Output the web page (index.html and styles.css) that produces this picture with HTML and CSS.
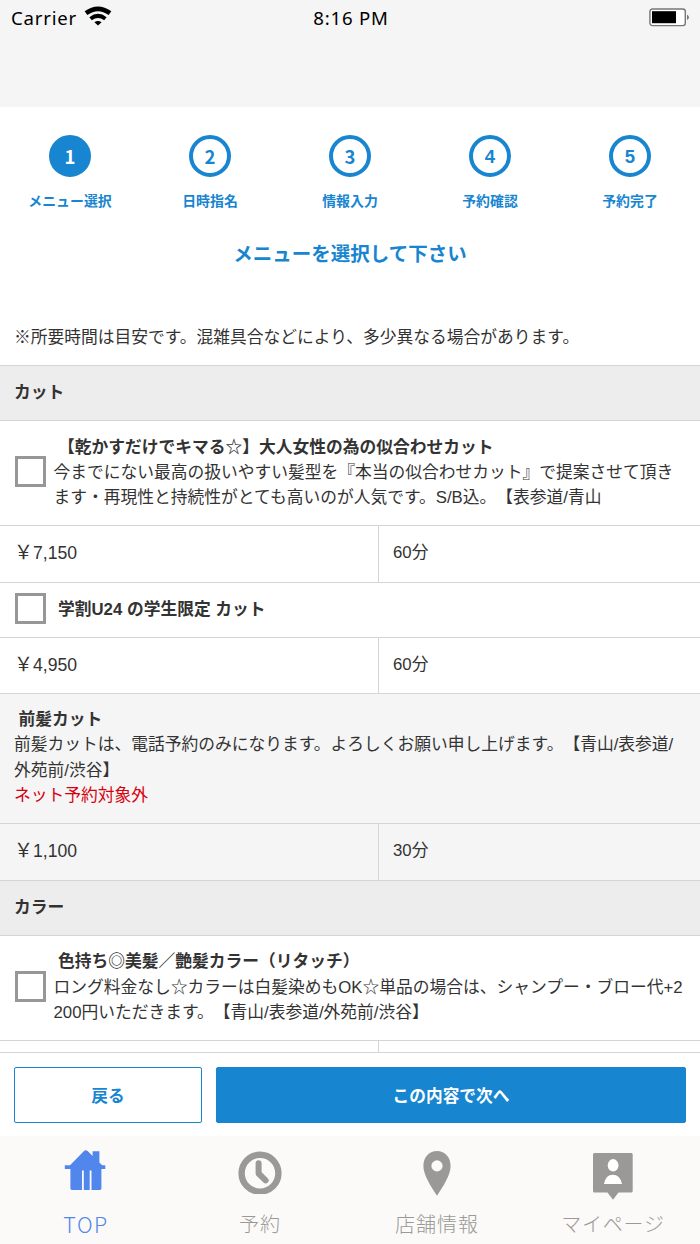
FILE: index.html
```html
<!DOCTYPE html>
<html lang="ja">
<head>
<meta charset="utf-8">
<title>メニュー選択</title>
<link rel="stylesheet" href="styles.css">
</head>
<body>
<div class="app">
  <header class="status">
    <div class="carrier"><span>Carrier</span>
      <svg class="wifi" width="28" height="20" viewBox="0 0 28 20"><g fill="none" stroke="#000"><path d="M2 7.2Q14 -1.4 26 7.2" stroke-width="4.6"/><path d="M6.6 12.8Q14 7 21.4 12.8" stroke-width="4"/></g><path d="M10.4 16.2Q14 13.6 17.6 16.2L14 19.6Z"/></svg>
    </div>
    <span class="clock">8:16 PM</span>
    <svg class="battery" width="42" height="20" viewBox="0 0 42 20"><rect x=".9" y="1" width="35.4" height="16.6" rx="2.6" fill="#fff" stroke="#777" stroke-width="1.4"/><rect x="3" y="3.2" width="24" height="12" fill="#000"/><path d="M38 6.4Q42 9.3 38 12.1Z" fill="#777"/></svg>
  </header>
  <main class="content">
    <ol class="steps">
      <li><b class="dot on">1</b><span>メニュー選択</span></li>
      <li><b class="dot">2</b><span>日時指名</span></li>
      <li><b class="dot">3</b><span>情報入力</span></li>
      <li><b class="dot arial">4</b><span>予約確認</span></li>
      <li><b class="dot arial">5</b><span>予約完了</span></li>
    </ol>
    <h1 class="title">メニューを選択して下さい</h1>
    <p class="note">※所要時間は目安です。混雑具合などにより、多少異なる場合があります。</p>
    <h2 class="category">カット</h2>
    <div class="item tall">
      <i class="check"></i>
      <div><b class="name">【乾かすだけでキマる☆】大人女性の為の似合わせカット</b><p>今までにない最高の扱いやすい髪型を『本当の似合わせカット』で提案させて頂き<br>ます・再現性と持続性がとても高いのが人気です。S/B込。【表参道/青山</p></div>
    </div>
    <div class="price"><span class="yen"><i>￥</i>7,150</span><span>60分</span></div>
    <div class="item short">
      <i class="check"></i>
      <div><b class="name">学割U24 の学生限定 カット</b></div>
    </div>
    <div class="price second"><span class="yen"><i>￥</i>4,950</span><span>60分</span></div>
    <div class="item phone">
      <div><b class="name">前髪カット</b><p>前髪カットは、電話予約のみになります。よろしくお願い申し上げます。【青山/表参道/<br>外苑前/渋谷】</p><p class="warn">ネット予約対象外</p></div>
    </div>
    <div class="price grey"><span class="yen"><i>￥</i>1,100</span><span>30分</span></div>
    <h2 class="category">カラー</h2>
    <div class="item color">
      <i class="check"></i>
      <div><b class="name">色持ち◎美髪／艶髪カラー（リタッチ）</b><p>ロング料金なし☆カラーは白髪染めもOK☆単品の場合は、シャンプー・ブロー代+2<br>200円いただきます。【青山/表参道/外苑前/渋谷】</p></div>
    </div>
    <div class="price cut"><span></span><span></span></div>
  </main>
  <div class="actions"><button class="btn back">戻る</button><button class="btn next">この内容で次へ</button></div>
  <nav class="tabs">
    <a class="tab top"><svg width="44" height="46" viewBox="0 0 44 46"><path fill="#5186ec" d="M.8 17.3H6L19.5 3.4Q21.5 1.4 23.6 3.1L28.6 8V3.3H35.4V14.5L38.2 17.3H41.3V21H37.4V40.6Q37.4 42 36 42H27.5V22.4H25.7V42H19.8V22.4H18V42H7.8Q6.4 42 6.4 40.6V21H.8Z"/></svg><span>TOP</span></a>
    <a class="tab reserve"><svg width="44" height="46" viewBox="0 0 44 46"><g fill="none" stroke="#9a9997"><circle cx="22" cy="25.2" r="18.4" stroke-width="6.4"/><path d="M20.6 15.2V25.5L27.6 32.4" stroke-width="6" stroke-linecap="round" stroke-linejoin="round"/></g></svg><span>予約</span></a>
    <a class="tab shop"><svg width="29" height="48" viewBox="0 0 29 48"><path fill="#9a9997" fill-rule="evenodd" d="M14 3.1C5.6 3.1.4 9.8.4 18c0 9 7.3 20 13.6 29.7C20.4 38 27.6 27 27.6 18 27.6 9.8 22.4 3.1 14 3.1ZM14 12.3a5.6 5.6 0 1 1 0 11.2a5.6 5.6 0 0 1 0-11.2Z"/></svg><span>店舗情報</span></a>
    <a class="tab mine"><svg width="41" height="52" viewBox="0 0 41 52"><path fill="#9a9997" d="M1.5 5H38.3Q39.7 5 39.7 6.5V43Q39.7 44.5 38.3 44.5H25.5L20 51.7 14.5 44.5H1.5Q0 44.5 0 43V6.5Q0 5 1.5 5Z"/><ellipse cx="20.1" cy="17.3" rx="5.4" ry="6.2" fill="#fff"/><path d="M11 36Q12.6 26.8 19.8 26.8T29 36Z" fill="#fff"/></svg><span>マイページ</span></a>
  </nav>
</div>
</body>
</html>
```
FILE: styles.css
```css
* { box-sizing: border-box; margin: 0; padding: 0; }
body { width: 700px; height: 1244px; overflow: hidden; background: #fff; color: #333;
  font: 16.75px/25.4px "Liberation Sans", "Noto Sans CJK JP", sans-serif;
  text-spacing-trim: space-all; }
.app { display: flex; flex-direction: column; height: 1244px; }
.status { height: 107px; flex: none; background: #f5f5f5; display: grid;
  grid-template-columns: 1fr auto 1fr; align-items: start; padding: 6px 9px 0 11px;
  font: 18.6px/24px "Noto Sans", sans-serif; letter-spacing: .8px; color: #000; }
.carrier { display: flex; gap: 6.5px; }
.battery { justify-self: end; margin-top: 2px; }
.content { height: 945px; flex: none; overflow: hidden; }
.steps { display: grid; grid-template-columns: repeat(5, 1fr); list-style: none; padding-top: 28px; height: 122px; }
.steps li { display: flex; flex-direction: column; align-items: center; gap: 12px;
  color: #1785d0; font-size: 13.9px; font-weight: 700; white-space: nowrap; }
.dot { width: 42px; height: 42px; border: 4px solid #1785d0; border-radius: 50%; background: #fff;
  font: 700 18.5px/34px "Noto Sans CJK JP", sans-serif; text-align: center; }
.dot.arial { font-family: "Liberation Sans", sans-serif; line-height: 36px; }
.dot.on { background: #1785d0; color: #fff; }
.title { height: 136px; padding-top: 13px; text-align: center; color: #1785d0; font-size: 19.5px; line-height: 25px; }
.note { margin-top: -40px; height: 40px; padding-left: 14px; white-space: nowrap; }
.category { height: 54.5px; border-top: 1.5px solid #d5d5d5; background: #ededed;
  font-size: 16.75px; line-height: 54px; padding-left: 14px; }
.item { display: flex; align-items: center; gap: 7.5px; padding-left: 15px; border-top: 1.5px solid #d5d5d5; white-space: nowrap; }
.name { display: block; padding-left: 4.5px; }
.tall { height: 105.5px; }
.short { height: 54.5px; }
.phone { height: 130.5px; background: #f5f5f5; padding-left: 14px; padding-bottom: 1px; }
.color { height: 105px; }
.warn { color: #d7000f; }
.check { flex: none; width: 31px; height: 31px; margin-bottom: 2px; border: 3px solid #979797; background: #fff; }
.price { height: 57px; display: grid; grid-template-columns: 378px 1fr; border-top: 1.5px solid #d5d5d5; line-height: 54px; }
.price span { padding-left: 14px; }
.price .yen { display: flex; font-size: 17.6px; }
.yen i { width: 19px; font-style: normal; font-size: 19px; }
.price span + span { border-left: 1px solid #d5d5d5; }
.second { height: 56px; }
.grey { background: #f5f5f5; }
.cut { height: 20px; }
.actions { height: 84px; flex: none; border-top: 1px solid #d5d5d5; padding: 14px; display: grid; grid-template-columns: 188px 1fr; gap: 14px; }
.btn { height: 56px; border: 1.6px solid #1785d0; border-radius: 2px; background: #fff; color: #1785d0;
  font: 700 16.7px/50px "Noto Sans CJK JP", sans-serif; }
.btn.next { background: #1785d0; color: #fff; }
.tabs { height: 108px; flex: none; background: #fbfaf8; display: grid; grid-template-columns: 172px 176px 178px 174px;
  color: #9a9997; font: 300 20px/28px "Noto Sans CJK JP", sans-serif; letter-spacing: 1px; }
.tab { display: grid; grid-template-rows: 60px 28px; justify-items: center; padding-top: 12px; white-space: nowrap; }
.tab span { margin-top: 2px; }
.top { color: #5186ec; font-size: 21.5px; letter-spacing: 1.5px; }
.mine span { letter-spacing: .8px; }
```
